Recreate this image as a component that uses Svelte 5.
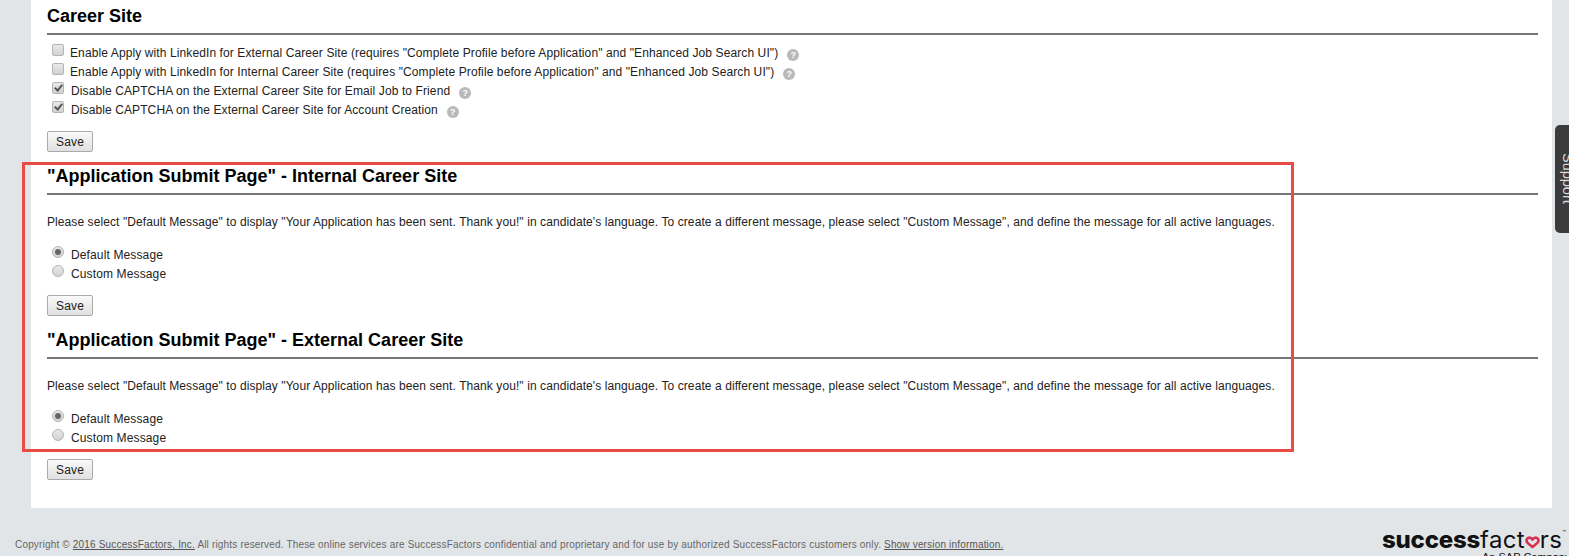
<script lang="ts">
	const options = [
		{ label: 'Enable Apply with LinkedIn for External Career Site (requires "Complete Profile before Application" and "Enhanced Job Search UI")', checked: false },
		{ label: 'Enable Apply with LinkedIn for Internal Career Site (requires "Complete Profile before Application" and "Enhanced Job Search UI")', checked: false },
		{ label: 'Disable CAPTCHA on the External Career Site for Email Job to Friend', checked: true },
		{ label: 'Disable CAPTCHA on the External Career Site for Account Creation', checked: true }
	];
	const message =
		'Please select "Default Message" to display "Your Application has been sent. Thank you!" in candidate\'s language. To create a different message, please select "Custom Message", and define the message for all active languages.';
	const submitPages = [
		{ id: 'internal', title: '"Application Submit Page" - Internal Career Site' },
		{ id: 'external', title: '"Application Submit Page" - External Career Site' }
	];
</script>

<div class="page">
	<main class="panel">
		<section class="career">
			<h2>Career Site</h2>
			<div class="checks">
				{#each options as o}
					<label class="check" class:on={o.checked}>
						<input type="checkbox" checked={o.checked} />
						<span>{o.label}</span>
						<i class="help">?</i>
					</label>
				{/each}
			</div>
			<button>Save</button>
		</section>

		{#each submitPages as p}
			<section class="submit">
				<h2>{p.title}</h2>
				<p>{message}</p>
				<div class="radios">
					<label class="radio"><input type="radio" name={p.id} checked /><span>Default Message</span></label>
					<label class="radio"><input type="radio" name={p.id} /><span>Custom Message</span></label>
				</div>
				<button>Save</button>
			</section>
		{/each}
	</main>

	<footer>
		<div class="copy">
			Copyright © <a href="#top">2016 SuccessFactors, Inc.</a> All rights reserved. These online services are SuccessFactors confidential and proprietary and for use by authorized SuccessFactors customers only. <a href="#top">Show version information.</a>
		</div>
		<div class="logo">
			<div class="mark">
				<b>success</b>fact<svg class="heart" viewBox="0 0 16 14" width="15" height="13"><path d="M8 12 2.600 7.200C.6 5.200 1.800 1.800 4.600 1.800 6 1.800 7.300 2.600 8 4c.7-1.400 2-2.200 3.400-2.200 2.800 0 4 3.400 2 5.400Z" fill="none" stroke="#d9304f" stroke-width="2.800" stroke-linejoin="round"/></svg>rs<sup>™</sup>
			</div>
			<div class="sap">An SAP Company</div>
		</div>
	</footer>

	<div class="highlight"></div>
	<div class="support"><span>Support</span></div>
</div>

<style>
	:global(body) {
		margin: 0;
		background: #e2e5e8;
		overflow: hidden;
	}
	.page {
		height: 556px;
		overflow: hidden;
		font-family: 'Liberation Sans', Arial, sans-serif;
		font-size: 12px;
		color: #222;
	}
	.panel {
		box-sizing: border-box;
		height: 508px;
		margin: 0 17px 0 31px;
		padding: 0 14px 0 16px;
		background: #fff;
	}
	h2 {
		margin: 0;
		font-size: 18px;
		line-height: 33px;
		font-weight: bold;
		color: #000;
		border-bottom: 2px solid #777;
	}
	.career {
		height: 160px;
	}
	.submit {
		height: 164px;
	}
	.checks {
		padding-top: 8px;
		margin-bottom: 12px;
		letter-spacing: 0.105px;
	}
	.check,
	.radio {
		display: flex;
		align-items: center;
		height: 19px;
		padding-left: 5px;
	}
	input {
		appearance: none;
		position: relative;
		box-sizing: border-box;
		flex: none;
		width: 12px;
		height: 12px;
		margin: -5px 6px 0 0;
		border: 1px solid #b4b4b4;
		border-radius: 2px;
		background: linear-gradient(#e8e8e8, #d2d2d2);
	}
	input[type='radio'] {
		border-radius: 50%;
	}
	input[type='checkbox']:checked::after {
		content: '';
		position: absolute;
		left: 3px;
		top: 0;
		width: 3px;
		height: 6px;
		border: solid #555;
		border-width: 0 2px 2px 0;
		transform: rotate(40deg);
	}
	input[type='radio']:checked::after {
		content: '';
		position: absolute;
		left: 2px;
		top: 2px;
		width: 6px;
		height: 6px;
		border-radius: 50%;
		background: #666;
	}
	.check.on span,
	.radio span {
		margin-left: 1px;
	}
	.radio span {
		letter-spacing: 0.13px;
	}
	.help {
		display: inline-block;
		flex: none;
		width: 12px;
		height: 12px;
		margin: 4px 0 0 9px;
		border-radius: 50%;
		background: #b9b9b9;
		color: #fff;
		font: bold 9px/12px 'Liberation Sans', sans-serif;
		text-align: center;
	}
	button {
		display: block;
		box-sizing: border-box;
		width: 46px;
		height: 21px;
		padding: 0;
		border: 1px solid #aaa;
		border-radius: 2px;
		background: linear-gradient(#fafafa, #e0e0e0);
		font: 12px 'Liberation Sans', sans-serif;
		letter-spacing: 0.2px;
		color: #222;
	}
	p {
		margin: 20px 0 0;
		line-height: 14px;
		letter-spacing: 0.085px;
	}
	.radios {
		margin: 16px 0 12px;
	}
	footer {
		display: flex;
		justify-content: space-between;
		align-items: flex-start;
		padding: 0 9px 0 15px;
		color: #666;
	}
	.copy {
		padding-top: 31px;
		font-size: 10px;
		letter-spacing: 0.173px;
	}
	.copy a {
		color: #555;
		text-decoration: underline;
	}
	.logo {
		width: 178px;
		padding-top: 18px;
		color: #111;
	}
	.mark {
		font-family: Inter, sans-serif;
		font-size: 24px;
		line-height: 28px;
		white-space: nowrap;
		letter-spacing: 0.3px;
	}
	.mark b {
		font-weight: 800;
		letter-spacing: -0.2px;
	}
	.heart {
		vertical-align: -1px;
	}
	sup {
		font-size: 6px;
		line-height: 0;
		letter-spacing: 0;
		vertical-align: 13px;
	}
	.sap {
		margin-top: -3px;
		padding-left: 100px;
		font-size: 11px;
		line-height: 13px;
		white-space: nowrap;
	}
	.highlight {
		position: absolute;
		left: 22px;
		top: 162px;
		box-sizing: border-box;
		width: 1272px;
		height: 290px;
		border: 3px solid #ea4b45;
		pointer-events: none;
	}
	.support {
		position: absolute;
		left: 1555px;
		top: 125px;
		width: 14px;
		height: 108px;
		overflow: hidden;
		background: #3b3b3b;
		border-radius: 5px 0 0 5px;
	}
	.support span {
		position: absolute;
		left: 5px;
		top: 28px;
		color: #ddd;
		font-size: 14.5px;
		writing-mode: vertical-rl;
	}
</style>
